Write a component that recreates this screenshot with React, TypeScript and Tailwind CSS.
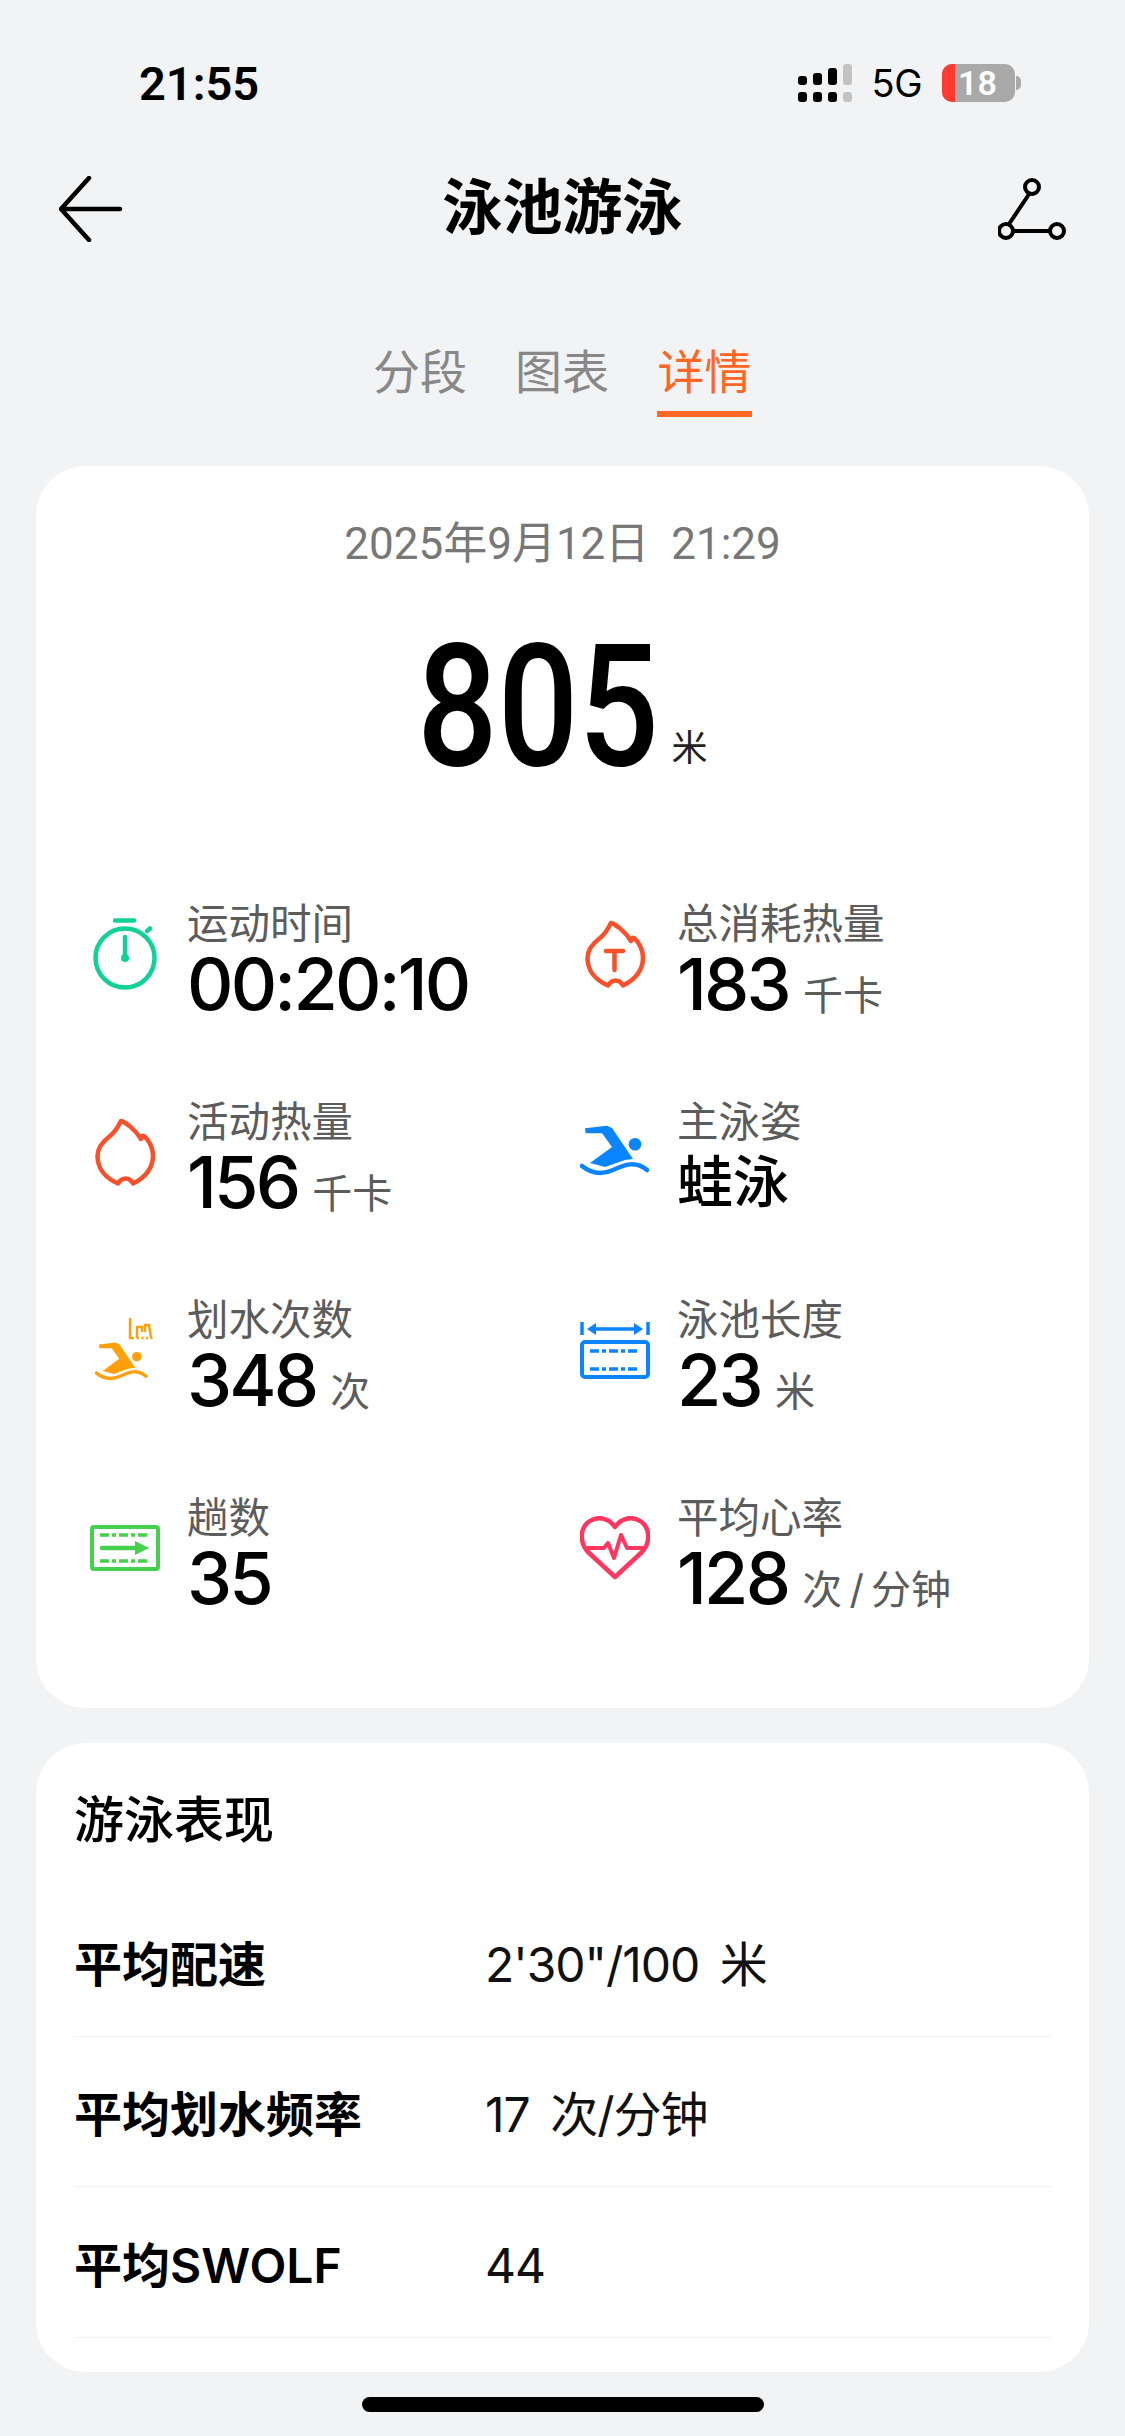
const SANS = "font-['Roboto','Noto_Sans_CJK_SC',sans-serif]";
const NUMS = "font-['Inter','Noto_Sans_CJK_SC',sans-serif]";

function StopwatchIcon() {
  return (
    <svg width="64" height="72" viewBox="0 0 64 72" fill="none">
      <circle cx="32" cy="40" r="29.5" stroke="#11d199" strokeWidth="4.5" />
      <path d="M22 2.5h19M54 13l3-2.5M32 19v21" stroke="#11d199" strokeWidth="4.5" strokeLinecap="round" />
      <circle cx="32" cy="40" r="4" fill="#11d199" />
    </svg>
  );
}

function FlameIcon({ withT }: { withT?: boolean }) {
  return (
    <svg width="60" height="68" viewBox="0 0 60 68" fill="none">
      <path
        d="M26 3C30 4 40 11 46 21C46 19 47 17 49 18C54 22 58 30 58 38C58 50 50 60 38 65.5C36 62 34 60.5 31 60.5C28 60.5 25 62 23 65.5C10 60 2.5 50 2.5 38C2.5 30 7 24 15 18C20 14 23 9 26 3Z"
        stroke="#f8502b"
        strokeWidth="4.5"
        strokeLinejoin="round"
      />
      {withT && <path d="M21 31h17M29.5 31v19" stroke="#f8502b" strokeWidth="4.5" strokeLinecap="round" />}
    </svg>
  );
}

function SwimmerShape({ color }: { color: string }) {
  return (
    <>
      <path d="M5 3.3L27 .7L32 3L53 34L45 35L25 42L10 38L32 22L22 8.3L5.7 8.3Z" fill={color} />
      <circle cx="55" cy="19.3" r="6.3" fill={color} />
      <path d="M2 41C12 49 22 50 33 45S55 35 67 45" stroke={color} strokeWidth="4.5" strokeLinecap="round" />
    </>
  );
}

function SwimIcon() {
  return (
    <svg width="70" height="54" viewBox="0 0 70 54" fill="none">
      <SwimmerShape color="#0a84ff" />
    </svg>
  );
}

function StrokeIcon() {
  return (
    <svg width="60" height="66" viewBox="0 0 60 66" fill="none">
      <path d="M35 1V21H39M42 21V10H47V15M50 15V8H54L56 21" stroke="#ff9f0a" strokeWidth="2.4" />
      <path d="M42 21h16" stroke="#ff9f0a" strokeWidth="2.4" strokeDasharray="2 2.5" />
      <g transform="translate(0 25) scale(0.76)">
        <SwimmerShape color="#ff9f0a" />
      </g>
    </svg>
  );
}

function LapsIcon() {
  return (
    <svg width="70" height="46" viewBox="0 0 70 46" fill="none">
      <rect x="2" y="2" width="66" height="42" rx="2" stroke="#45d14d" strokeWidth="4" />
      <path d="M10 10h50M10 36h50" stroke="#45d14d" strokeWidth="3.5" strokeDasharray="9 3 4 3" />
      <path d="M12 23h33" stroke="#45d14d" strokeWidth="4.5" strokeLinecap="round" />
      <path d="M45 16l14 7-14 7Z" fill="#45d14d" />
    </svg>
  );
}

function PoolIcon() {
  return (
    <svg width="70" height="58" viewBox="0 0 70 58" fill="none">
      <path d="M2 1v13M68 1v13M14 8h42" stroke="#0a84ff" strokeWidth="3.5" />
      <path d="M7 8l9-6v12ZM63 8l-9-6v12Z" fill="#0a84ff" />
      <rect x="2" y="21" width="66" height="35" rx="3" stroke="#0a84ff" strokeWidth="4" />
      <path d="M10 30h50M10 48h50" stroke="#0a84ff" strokeWidth="3.5" strokeDasharray="9 3 4 3" />
    </svg>
  );
}

function HeartIcon() {
  return (
    <svg width="70" height="64" viewBox="0 0 70 64" fill="none">
      <path
        d="M35 61L8 36C-1 26 0 12 9 5.5C17 0 28 1 35 11C42 1 53 0 61 5.5C70 12 71 26 62 36Z"
        stroke="#ff3660"
        strokeWidth="4.5"
        strokeLinejoin="round"
      />
      <path d="M7 32H24L28 27L34 42L41 19L47 32H63" stroke="#ff3660" strokeWidth="4" strokeLinejoin="round" />
    </svg>
  );
}

function SignalIcon() {
  const bars = [
    { top: "h-[9px]", on: true },
    { top: "h-[12px]", on: true },
    { top: "h-[17px]", on: true },
    { top: "h-[21px]", on: false },
  ];
  return (
    <div className="flex gap-[6px] items-end">
      {bars.map((b, i) => (
        <div key={i} className="flex flex-col gap-[7px]">
          <div className={`w-[9px] rounded-[3px] ${b.top} ${b.on ? "bg-black" : "bg-[#c2c2c2]"}`} />
          <div className={`w-[9px] h-[10px] rounded-[3px] ${b.on ? "bg-black" : "bg-[#c2c2c2]"}`} />
        </div>
      ))}
    </div>
  );
}

const STATS = [
  { icon: <StopwatchIcon />, label: "运动时间", value: "00:20:10", unit: "" },
  { icon: <FlameIcon withT />, label: "总消耗热量", value: "183", unit: "千卡" },
  { icon: <FlameIcon />, label: "活动热量", value: "156", unit: "千卡" },
  { icon: <SwimIcon />, label: "主泳姿", value: "蛙泳", unit: "" },
  { icon: <StrokeIcon />, label: "划水次数", value: "348", unit: "次" },
  { icon: <PoolIcon />, label: "泳池长度", value: "23", unit: "米" },
  { icon: <LapsIcon />, label: "趟数", value: "35", unit: "" },
  { icon: <HeartIcon />, label: "平均心率", value: "128", unit: "次\u2009/\u2009分钟" },
];

const ROWS = [
  { label: "平均配速", value: "2'30\"/100 米" },
  { label: "平均划水频率", value: "17 次/分钟" },
  { label: "平均SWOLF", value: "44" },
];

export default function App() {
  return (
    <div className={`w-[1125px] h-[2436px] bg-[#f2f3f5] flex flex-col overflow-hidden ${SANS}`}>
      <div className="h-[151px] pt-[58px] pl-[139px] pr-[104px] flex justify-between items-start">
        <span className="text-[47px] leading-[52px] font-semibold text-black">21:55</span>
        <div className="flex items-center gap-[20px] pt-[5px]">
          <SignalIcon />
          <span className={`text-[38px] leading-[40px] tracking-[-0.5px] text-black ${NUMS}`}>5G</span>
          <div className="flex items-center gap-[1px]">
            <div className="w-[73px] h-[38px] rounded-[10px] bg-[#a9a9a9] overflow-hidden flex">
              <div className="w-[13px] bg-[#ff3b30]" />
              <span className="pl-[3px] text-[34px] leading-[38px] font-semibold text-white">18</span>
            </div>
            <div className="w-[5px] h-[14px] rounded-r-full bg-[#a9a9a9]" />
          </div>
        </div>
      </div>

      <div className="h-[116px] px-[59px] flex items-center justify-between">
        <svg width="68" height="66" viewBox="0 0 68 66" fill="none">
          <path d="M30 2L2 33l28 31M2 33h59" stroke="#000" strokeWidth="4.5" strokeLinecap="round" strokeLinejoin="round" />
        </svg>
        <h1 className="text-[60px] leading-[70px] font-semibold text-black">泳池游泳</h1>
        <svg width="68" height="62" viewBox="0 0 68 62" fill="none">
          <path d="M31.5 15.5L11 46M15 53h37" stroke="#000" strokeWidth="4" />
          <circle cx="34" cy="9" r="7" stroke="#000" strokeWidth="4" />
          <circle cx="8" cy="53" r="7" stroke="#000" strokeWidth="4" />
          <circle cx="59" cy="53" r="7" stroke="#000" strokeWidth="4" />
        </svg>
      </div>

      <div className="h-[199px] flex justify-center gap-[48px] pt-[77px]">
        <span className="text-[47px] leading-[58px] text-[#888888]">分段</span>
        <span className="text-[47px] leading-[58px] text-[#888888]">图表</span>
        <div className="flex flex-col items-center">
          <span className="text-[47px] leading-[58px] text-[#ff6624]">详情</span>
          <div className="w-[95px] h-[6px] mt-[9px] bg-[#ff6624]" />
        </div>
      </div>

      <div className="mx-[36px] h-[1242px] rounded-[50px] bg-white flex flex-col items-center pt-[50px]">
        <p className="text-[44px] leading-[56px] text-[#777777]">2025年9月12日&nbsp; 21:29</p>
        <div className="flex items-baseline mt-[60px] h-[150px]">
          <div className="w-[240px]">
            <span className="inline-block origin-left scale-x-[0.83] text-[171px] leading-[150px] font-medium text-black">805</span>
          </div>
          <span className="text-[36px] ml-[14px] -translate-y-[4px] text-[#222222]">米</span>
        </div>
        <div className="self-stretch grid grid-cols-[490px_1fr] gap-y-[60px] pl-[26px] mt-[110px]">
          {STATS.map((s) => (
            <div key={s.label} className="flex items-center h-[138px]">
              <div className="w-[125px] mb-[14px] flex justify-center shrink-0">{s.icon}</div>
              <div className="flex flex-col">
                <span className="text-[41.5px] leading-[46px] text-[#5c5c5c]">{s.label}</span>
                <div className={`flex items-baseline h-[72px] ${NUMS}`}>
                  <span className={s.value === "蛙泳" ? "text-[56px] leading-[72px] font-medium text-black" : "text-[72px] leading-[72px] font-medium tracking-[-2.8px] text-black"}>{s.value}</span>
                  {s.unit && <span className="text-[40px] ml-[14px] text-[#5c5c5c]">{s.unit}</span>}
                </div>
              </div>
            </div>
          ))}
        </div>
      </div>

      <div className={`mx-[36px] mt-[35px] h-[629px] rounded-[50px] bg-white px-[38px] pt-[42px] ${NUMS}`}>
        <h2 className="text-[50px] leading-[70px] font-medium text-black">游泳表现</h2>
        <div className="mt-[31px]">
          {ROWS.map((r) => (
            <div key={r.label} className="flex items-center h-[150.5px] pt-[8px] border-b border-[#f0f0f0]">
              <span className="w-[411px] text-[48px] font-semibold text-black">{r.label}</span>
              <span className="text-[48px] tracking-[-1px] [word-spacing:8px] text-[#111111]">{r.value}</span>
            </div>
          ))}
        </div>
      </div>

      <div className="flex justify-center mt-[25px]">
        <div className="w-[402px] h-[15px] rounded-full bg-black" />
      </div>
    </div>
  );
}
